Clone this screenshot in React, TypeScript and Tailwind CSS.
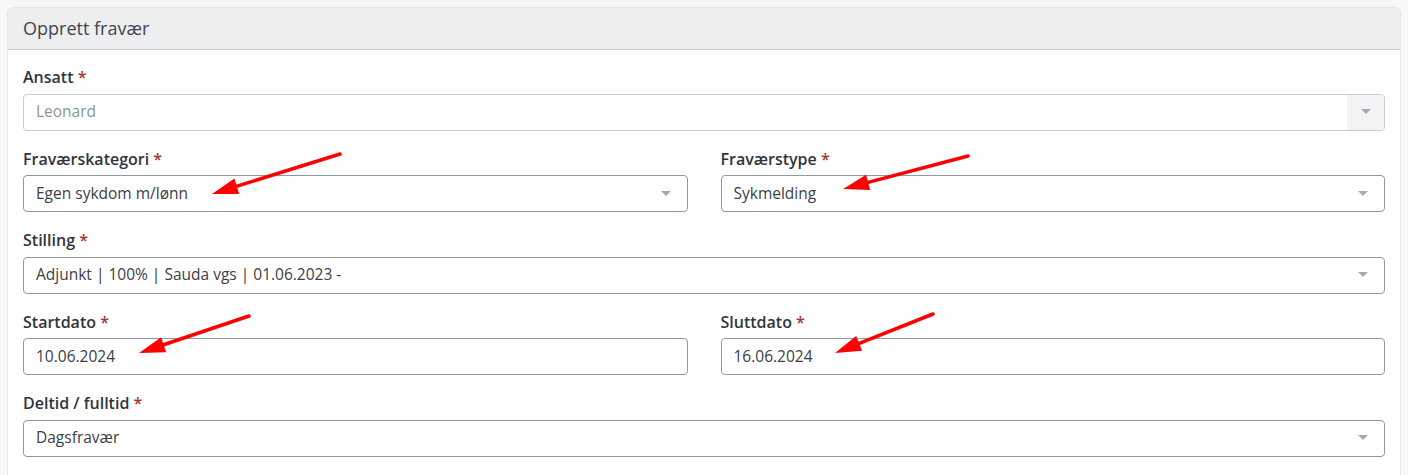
import React from 'react';

const Caret = () => (
  <svg width="10" height="6" viewBox="0 0 10 6" className="shrink-0">
    <path d="M0 0 L10 0 L5 5 Z" fill="#a3aab1" />
  </svg>
);

const Label: React.FC<{ text: string }> = ({ text }) => (
  <div className="mb-[5px] text-[16px] font-semibold leading-[22.5px] text-[#2f353b]">
    {text} <span className="text-[#a4343a]">*</span>
  </div>
);

const Field: React.FC<{ value: string; select?: boolean; disabled?: boolean }> = ({ value, select, disabled }) => {
  if (disabled) {
    return (
      <div className="flex h-[37px] items-stretch overflow-hidden rounded-[4px] border border-[#c9ced3] bg-white">
        <div className="flex flex-1 items-center px-3 text-[15.5px] text-[#8d959c]">{value}</div>
        <div className="flex w-[37px] items-center justify-center bg-[#f2f3f4]">
          <Caret />
        </div>
      </div>
    );
  }
  return (
    <div className="flex h-[37px] items-center justify-between rounded-[4px] border border-[#8e99a3] bg-white pl-3 pr-[16px]">
      <span className="text-[15.5px] text-[#3a4047]">{value}</span>
      {select && <Caret />}
    </div>
  );
};

const Arrow: React.FC<{ x1: number; y1: number; x2: number; y2: number }> = ({ x1, y1, x2, y2 }) => {
  const dx = x2 - x1;
  const dy = y2 - y1;
  const len = Math.sqrt(dx * dx + dy * dy);
  const ux = dx / len;
  const uy = dy / len;
  const headLen = 26;
  const headW = 8;
  const bx = x2 - ux * headLen;
  const by = y2 - uy * headLen;
  const px = -uy;
  const py = ux;
  const pts = `${x2},${y2} ${bx + px * headW},${by + py * headW} ${bx - px * headW},${by - py * headW}`;
  return (
    <g>
      <line x1={x1} y1={y1} x2={bx + ux * 4} y2={by + uy * 4} stroke="#ff0000" strokeWidth="3.5" strokeLinecap="round" />
      <polygon points={pts} fill="#ff0000" />
    </g>
  );
};

export default function App() {
  return (
    <div className="relative h-[475px] w-[1408px] overflow-hidden bg-[#f6f7f8] px-[7px] pt-[7px]" style={{ fontFamily: '"Open Sans", "Noto Sans", sans-serif' }}>
      <div className="h-[500px] rounded-t-[5px] border border-[#e3e5e8] bg-white">
        <div className="flex h-[42px] items-center border-b border-[#c8ccd0] bg-[#eceef0] px-[15px] text-[18px] text-[#3f464d]">
          Opprett fravær
        </div>
        <div className="flex flex-col gap-[17px] px-[15px] pt-[16px]">
          <div>
            <Label text="Ansatt" />
            <Field value="Leonard" disabled />
          </div>
          <div className="grid grid-cols-2 gap-[33px]">
            <div>
              <Label text="Fraværskategori" />
              <Field value="Egen sykdom m/lønn" select />
            </div>
            <div>
              <Label text="Fraværstype" />
              <Field value="Sykmelding" select />
            </div>
          </div>
          <div>
            <Label text="Stilling" />
            <Field value="Adjunkt | 100% | Sauda vgs | 01.06.2023 -" select />
          </div>
          <div className="grid grid-cols-2 gap-[33px]">
            <div>
              <Label text="Startdato" />
              <Field value="10.06.2024" />
            </div>
            <div>
              <Label text="Sluttdato" />
              <Field value="16.06.2024" />
            </div>
          </div>
          <div>
            <Label text="Deltid / fulltid" />
            <Field value="Dagsfravær" select />
          </div>
        </div>
      </div>
      <svg className="pointer-events-none absolute left-0 top-0" width="1408" height="475">
        <Arrow x1={340} y1={154} x2={212} y2={194} />
        <Arrow x1={968} y1={156} x2={843} y2={189} />
        <Arrow x1={249} y1={316} x2={139} y2={353} />
        <Arrow x1={933} y1={314} x2={835} y2={353} />
      </svg>
    </div>
  );
}
